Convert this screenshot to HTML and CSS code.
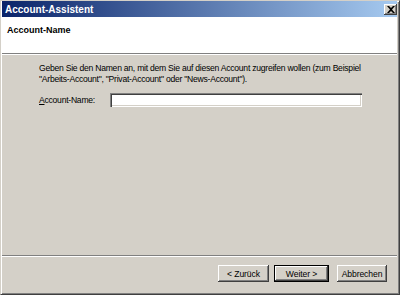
FILE: index.html
```html
<!DOCTYPE html>
<html lang="de">
<head>
  <meta charset="UTF-8">
  <title>Account-Assistent</title>
  <link rel="stylesheet" href="styles.css">
</head>
<body>
  <div class="fenster">
    <div class="titelleiste">
      <span class="titel">Account-Assistent</span>
      <button class="schliessen" type="button">
        <svg width="8" height="7" viewBox="0 0 8 7"><path d="M0 0h2l2 2 2-2h2L5 3.5 8 7H6L4 5 2 7H0l3-3.5z" fill="#000"/></svg>
      </button>
    </div>

    <div class="kopf">
      <h1>Account-Name</h1>
    </div>

    <div class="inhalt">
      <p class="hinweis">Geben Sie den Namen an, mit dem Sie auf diesen Account zugreifen wollen (zum Beispiel "Arbeits-Account", "Privat-Account" oder "News-Account").</p>
      <div class="zeile">
        <label for="accountName"><u>A</u>ccount-Name:</label>
        <input type="text" id="accountName">
      </div>
    </div>

    <div class="fuss">
      <button type="button" class="knopf">&lt; Zurück</button>
      <button type="button" class="knopf standard">Weiter &gt;</button>
      <button type="button" class="knopf abbrechen">Abbrechen</button>
    </div>
  </div>
</body>
</html>
```

FILE: styles.css
```css
/* --- Allgemein --- */
body {
  margin: 0;
  font-family: 'Liberation Sans', Arial, sans-serif;
  font-size: 8.6px;
  letter-spacing: -0.25px;
  color: #000;
  background: #d4d0c8;
}

/* --- Fensterrahmen --- */
.fenster {
  width: 400px;
  height: 295px;
  box-sizing: border-box;
  display: flex;
  flex-direction: column;
  background: #d4d0c8;
  border-top: 1px solid #d4d0c8;
  border-left: 1px solid #d4d0c8;
  border-right: 1px solid #404040;
  border-bottom: 1px solid #404040;
  box-shadow: inset 1px 1px 0 #fff, inset -1px -1px 0 #808080;
  padding: 0 2px 2px 1px;
}

/* --- Titelleiste --- */
.titelleiste {
  height: 16px;
  flex-shrink: 0;
  display: flex;
  align-items: center;
  justify-content: space-between;
  padding: 0 0 0 3px;
  background: linear-gradient(to right, #0a246a, #a6caf0);
}
.titel {
  color: #fff;
  font-weight: bold;
  font-size: 10px;
  letter-spacing: 0;
}
.schliessen {
  width: 13px;
  height: 11px;
  padding: 0;
  display: flex;
  align-items: center;
  justify-content: center;
  background: #d4d0c8;
  border: none;
  box-shadow: inset -1px -1px 0 #404040, inset 1px 1px 0 #fff, inset -2px -2px 0 #808080;
}

/* --- Kopfbereich --- */
.kopf {
  height: 37px;
  flex-shrink: 0;
  box-sizing: border-box;
  background: #fff;
  border-bottom: 1px solid #808080;
  box-shadow: 0 1px 0 #fff;
  padding: 8px 5px 0;
}
h1 {
  margin: 0;
  font-size: 9px;
  font-weight: bold;
  letter-spacing: 0;
}

/* --- Inhalt --- */
.inhalt {
  flex: 1;
  padding: 9px 20px 0 37px;
}
.hinweis {
  margin: 0;
  line-height: 11px;
}
.zeile {
  display: flex;
  align-items: center;
  margin-top: 8px;
}
label {
  width: 71px;
}
input {
  width: 252px;
  height: 14px;
  box-sizing: border-box;
  margin: 0;
  border: none;
  background: #fff;
  box-shadow: inset 1px 1px 0 #808080, inset 2px 2px 0 #404040, inset -1px -1px 0 #fff, inset -2px -2px 0 #d4d0c8;
}

/* --- Fuss mit Knoepfen --- */
.fuss {
  height: 37px;
  flex-shrink: 0;
  box-sizing: border-box;
  border-top: 1px solid #808080;
  box-shadow: inset 0 1px 0 #fff;
  display: flex;
  justify-content: flex-end;
  align-items: flex-start;
  padding: 9px 10px 0 0;
}
.knopf {
  width: 51px;
  height: 17px;
  padding: 0;
  font-family: inherit;
  font-size: 8.6px;
  letter-spacing: -0.1px;
  background: #d4d0c8;
  border: none;
  box-shadow: inset -1px -1px 0 #404040, inset 1px 1px 0 #fff, inset -2px -2px 0 #808080;
}
.knopf.standard {
  width: 55px;
  margin-left: 5px;
  box-shadow: inset 0 0 0 1px #000, inset -2px -2px 0 #404040, inset 2px 2px 0 #fff, inset -3px -3px 0 #808080;
}
.knopf.abbrechen {
  width: 50px;
  margin-left: 8px;
}
```
